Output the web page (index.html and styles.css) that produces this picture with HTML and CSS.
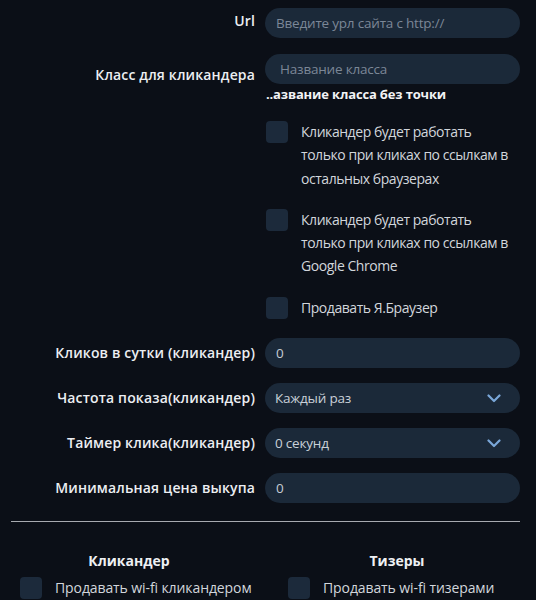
FILE: index.html
```html
<!DOCTYPE html>
<html lang="ru">
<head>
<meta charset="utf-8">
<link rel="stylesheet" href="styles.css">
</head>
<body>
<div class="page">
  <div class="form">
    <div class="row row-url">
      <label class="lbl">Url</label>
      <div class="field"><input class="inp" placeholder="Введите урл сайта с http://"></div>
    </div>
    <div class="row row-class">
      <label class="lbl lbl-low">Класс для кликандера</label>
      <div class="field">
        <input class="inp" placeholder="Название класса">
        <div class="hint">..азвание класса без точки</div>
      </div>
    </div>
    <div class="row">
      <div></div>
      <div class="checks">
        <div class="check"><span class="box"></span><span class="ctext">Кликандер будет работать<br>только при кликах по ссылкам в<br>остальных браузерах</span></div>
        <div class="check"><span class="box"></span><span class="ctext">Кликандер будет работать<br>только при кликах по ссылкам в<br>Google Chrome</span></div>
        <div class="check"><span class="box"></span><span class="ctext">Продавать Я.Браузер</span></div>
      </div>
    </div>
    <div class="row row-mid row-first">
      <label class="lbl">Кликов в сутки (кликандер)</label>
      <div class="field"><input class="inp val" value="0"></div>
    </div>
    <div class="row row-mid">
      <label class="lbl">Частота показа(кликандер)</label>
      <div class="field"><div class="select">Каждый раз<svg class="chev" viewBox="0 0 14 9" width="14" height="9"><path d="M1.5 1.5 L7 7 L12.5 1.5" fill="none" stroke="#7aa7d8" stroke-width="2.2" stroke-linecap="round" stroke-linejoin="round"/></svg></div></div>
    </div>
    <div class="row row-mid">
      <label class="lbl">Таймер клика(кликандер)</label>
      <div class="field"><div class="select">0 секунд<svg class="chev" viewBox="0 0 14 9" width="14" height="9"><path d="M1.5 1.5 L7 7 L12.5 1.5" fill="none" stroke="#7aa7d8" stroke-width="2.2" stroke-linecap="round" stroke-linejoin="round"/></svg></div></div>
    </div>
    <div class="row row-mid">
      <label class="lbl">Минимальная цена выкупа</label>
      <div class="field"><input class="inp val" value="0"></div>
    </div>
  </div>
  <hr class="sep">
  <div class="cols">
    <div class="col">
      <h3 class="ctitle">Кликандер</h3>
      <div class="check"><span class="box"></span><span class="ctext big">Продавать wi-fi кликандером</span></div>
    </div>
    <div class="col">
      <h3 class="ctitle">Тизеры</h3>
      <div class="check"><span class="box"></span><span class="ctext big">Продавать wi-fi тизерами</span></div>
    </div>
  </div>
</div>
</body>
</html>
```
FILE: styles.css
```css
html, body {
  margin: 0;
  padding: 0;
  background: #0b0f17;
  height: 100%;
  overflow: hidden;
}
body {
  font-family: "Open Sans", "Noto Sans", sans-serif;
  color: #e6e8ec;
}
.page {
  padding: 8px 16px 0 11px;
}
.form {
  display: flex;
  flex-direction: column;
}
.row {
  display: grid;
  grid-template-columns: 244px 255px;
  column-gap: 10px;
}
.row-class { margin-top: 16px; }
.lbl {
  text-align: right;
  font-weight: 600;
  font-size: 14px;
  letter-spacing: 0.15px;
  color: #eceef2;
  line-height: 20px;
}
.row-url .lbl { padding-top: 3px; }
.lbl-low { padding-top: 11px; }
.row-mid {
  margin-top: 15px;
  align-items: center;
  height: 30px;
}
.row-first { margin-top: 19px; }
.inp, .select {
  box-sizing: border-box;
  width: 100%;
  height: 30px;
  border: none;
  border-radius: 15px;
  background: #1b2939;
  font-family: "Open Sans", sans-serif;
  font-size: 13.5px;
  letter-spacing: -0.2px;
  color: #c9d0d8;
  padding: 0 11px;
  outline: none;
  display: block;
}
.inp::placeholder { color: #7b8797; }
.row-class .inp { padding-left: 15px; }
.val { color: #c6ccd4; }
.select {
  display: flex;
  align-items: center;
  justify-content: space-between;
  padding-right: 19px;
  padding-left: 10px;
}
.hint {
  font-weight: 700;
  font-size: 13px;
  letter-spacing: -0.15px;
  color: #f2f3f5;
  margin-top: 1px;
  line-height: 18px;
  padding-left: 1px;
}
.checks {
  display: flex;
  flex-direction: column;
  gap: 19px;
  margin-top: 18px;
}
.check {
  display: flex;
  align-items: flex-start;
  gap: 13px;
  padding-left: 1px;
}
.box {
  flex: none;
  width: 22px;
  height: 22px;
  border-radius: 4px;
  background: #1c2a3b;
}
.ctext {
  font-size: 14px;
  letter-spacing: -0.45px;
  line-height: 23.3px;
  color: #d2d6dc;
  margin-top: -1px;
  white-space: nowrap;
}
.ctext.big {
  font-size: 14px;
  letter-spacing: -0.1px;
}
.sep {
  border: none;
  height: 1px;
  background: #a7aab0;
  margin: 18px 0 0 0;
  width: 509px;
}
.cols {
  display: flex;
  padding-left: 9px;
  gap: 50px;
}
.col {
  width: 218px;
}
.ctitle {
  margin: 29px 0 6px;
  text-align: center;
  font-size: 14px;
  font-weight: 700;
  line-height: 20px;
  color: #eef0f3;
}
.col .check { padding-left: 0; }
```
